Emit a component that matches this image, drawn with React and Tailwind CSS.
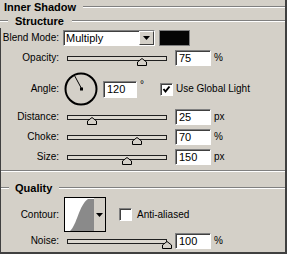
import React from 'react';

const Etch = ({ className = '' }) => (
  <div className={`h-[2px] border-t border-t-[#808080] border-b border-b-white ${className}`} />
);

const Sunken = ({ className = '', children }) => (
  <div
    className={`border border-t-[#808080] border-l-[#808080] border-r-white border-b-white shadow-[inset_1px_1px_0_#404040] ${className}`}
  >
    {children}
  </div>
);

const Label = ({ children }) => (
  <div className="w-[58px] shrink-0 text-right leading-none">{children}</div>
);

const Checkbox = ({ checked }) => (
  <Sunken className="w-[13px] h-[13px] bg-white flex items-center justify-center shrink-0">
    {checked && (
      <svg width="9" height="9" viewBox="0 0 9 9">
        <path d="M1.5 4 L3.5 6.5 L7.5 1.5" fill="none" stroke="#000" strokeWidth="2" />
      </svg>
    )}
  </Sunken>
);

const Slider = ({ pos }) => (
  <div className="relative w-[100px] h-[16px] flex items-center shrink-0">
    <div className="w-full h-[5px] border border-[#202020] bg-[#dcd8d0]" />
    <svg
      className="absolute top-[8px]"
      style={{ left: `${pos - 5}px` }}
      width="10"
      height="8"
      viewBox="0 0 10 8"
    >
      <polygon points="0.5,7.5 0.5,4 5,0.5 9.5,4 9.5,7.5" fill="#d4d0c8" stroke="#000" />
    </svg>
  </div>
);

const NumField = ({ value, className = 'w-[36px] h-[16px]' }) => (
  <Sunken className={`${className} bg-white flex items-center pl-[3px] text-[11px] leading-none shrink-0`}>
    {value}
  </Sunken>
);

const SliderRow = ({ label, pos, value, unit, className = '' }) => (
  <div className={`flex items-center h-[16px] ${className}`}>
    <Label>{label}</Label>
    <div className="ml-[8px]">
      <Slider pos={pos} />
    </div>
    <div className="ml-[8px]">
      <NumField value={value} />
    </div>
    <div className="ml-[3px] leading-none">{unit}</div>
  </div>
);

const DownArrow = () => (
  <svg width="7" height="4" viewBox="0 0 7 4">
    <polygon points="0,0 7,0 3.5,4" fill="#000" />
  </svg>
);

export default function App() {
  return (
    <div
      className="w-[287px] h-[254px] bg-[#d4d0c8] border-r-2 border-b-2 border-[#404040] flex flex-col text-[10px] text-black overflow-hidden"
      style={{ fontFamily: '"Liberation Sans", Arial, sans-serif' }}
    >
      {/* Title */}
      <div className="h-[14px] flex items-center pl-[4px]">
        <span className="font-bold text-[11px] leading-none">Inner Shadow</span>
        <Etch className="flex-1 ml-[7px]" />
      </div>

      {/* Structure header */}
      <div className="h-[14px] flex items-center">
        <Etch className="w-[8px]" />
        <span className="font-bold text-[11px] leading-none ml-[7px]">Structure</span>
        <Etch className="flex-1 ml-[8px]" />
      </div>

      <div className="flex-1 flex flex-col border-l border-[#404040]">
        {/* Blend mode */}
        <div className="flex items-center h-[16px] mt-[2px]">
          <Label>Blend Mode:</Label>
          <Sunken className="ml-[4px] w-[92px] h-[16px] bg-white flex items-center justify-between">
            <span className="pl-[2px] text-[11px] leading-none">Multiply</span>
            <div className="w-[15px] h-[14px] bg-[#d4d0c8] border border-t-white border-l-white border-r-[#404040] border-b-[#404040] flex items-center justify-center">
              <DownArrow />
            </div>
          </Sunken>
          <div className="ml-[4px] w-[31px] h-[16px] border border-[#808080] bg-[#050505]" />
        </div>

        <SliderRow label="Opacity:" pos={75} value="75" unit="%" className="mt-[4px]" />

        {/* Angle */}
        <div className="flex items-center h-[34px] mt-[6px]">
          <Label>Angle:</Label>
          <svg className="ml-[5px] shrink-0" width="34" height="34" viewBox="0 0 34 34">
            <circle cx="17" cy="17" r="15.5" fill="none" stroke="#000" strokeWidth="2" />
            <line x1="17.5" y1="16.5" x2="10.5" y2="3.5" stroke="#000" strokeWidth="1" />
            <rect x="16" y="15.5" width="3" height="3" fill="#000" />
          </svg>
          <div className="ml-[5px]">
            <NumField value="120" className="w-[34px] h-[17px]" />
          </div>
          <div className="w-[23px] pl-[3px] self-start mt-[8px] leading-none">°</div>
          <Checkbox checked />
          <span className="ml-[3px] leading-none">Use Global Light</span>
        </div>

        <SliderRow label="Distance:" pos={25} value="25" unit="px" className="mt-[3px]" />
        <SliderRow label="Choke:" pos={70} value="70" unit="%" className="mt-[4px]" />
        <SliderRow label="Size:" pos={60} value="150" unit="px" className="mt-[4px]" />

        <Etch className="mt-[5px]" />

        {/* Quality header */}
        <div className="h-[14px] flex items-center mt-[9px]">
          <Etch className="w-[8px]" />
          <span className="font-bold text-[11px] leading-none ml-[6px]">Quality</span>
          <Etch className="flex-1 ml-[7px]" />
        </div>

        {/* Contour */}
        <div className="flex items-center h-[35px] mt-[2px]">
          <Label>Contour:</Label>
          <div className="ml-[5px] w-[42px] h-[35px] border border-black flex shrink-0">
            <div className="w-[29px] h-full bg-white border-t border-l border-white">
              <svg width="28" height="32" viewBox="0 0 28 32">
                <path d="M4 32 C 11 26, 13 6, 22 0 L 28 0 L 28 32 Z" fill="#8a8a8a" />
              </svg>
            </div>
            <div className="flex-1 flex items-center justify-center bg-[#d4d0c8]">
              <DownArrow />
            </div>
          </div>
          <div className="ml-[13px]">
            <Checkbox />
          </div>
          <span className="ml-[5px] leading-none">Anti-aliased</span>
        </div>

        <SliderRow label="Noise:" pos={100} value="100" unit="%" className="mt-[1px]" />
      </div>
    </div>
  );
}
